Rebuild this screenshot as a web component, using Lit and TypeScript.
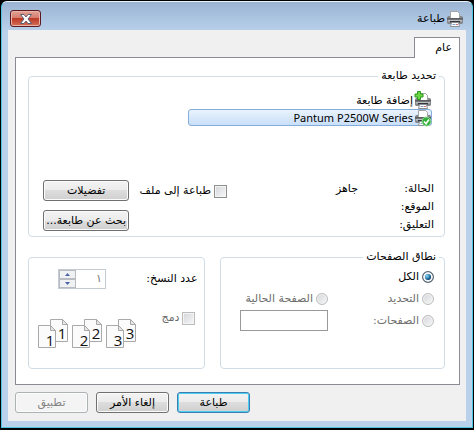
import { LitElement, html, css, svg, nothing } from "lit";
import { customElement, property } from "lit/decorators.js";

const printerBody = svg`
  <path d="M3.500 7V.500h7l2 2V7" fill="#fff" stroke="#a4a4a4"/>
  <path d="M1 5h2v2h10V5h2l1 1.500V12l-1 1H1l-1-1V6.500z" fill="#85888c"/>
  <path d="M0 7h16v1.500H0z" fill="#5c5f63"/>
  <path d="M1 9h14v1.500H1z" fill="#b9bcc0"/>
  <path d="M3 10h10v1.500H3z" fill="#33363a"/>
  <path d="M4.500 11.500h7l1 4h-9z" fill="#fff" stroke="#8c8f93"/>
  <path d="M5.500 13.500h3" stroke="#7fa3cc"/>
  <path d="M9 13.500h2" stroke="#c77"/>`;

@customElement("printer-icon")
export class PrinterIcon extends LitElement {
  @property() badge = "";

  static styles = css`
    :host { display: block; flex: none; width: 16px; height: 16px; }
    svg { display: block; overflow: visible; }
  `;

  render() {
    return html`<svg width="16" height="16" viewBox="0 0 16 16" aria-hidden="true">
      ${printerBody}
      ${this.badge === "add"
        ? svg`<path d="M2.500-1.500h3v2.500h2.500v3H5.500v2.500h-3V4H0V1h2.500z" fill="#6ad646" stroke="#2c9a1c"/>`
        : nothing}
      ${this.badge === "ready"
        ? svg`<circle cx="11.500" cy="11.500" r="4.500" fill="#34b13a" stroke="#9bdc9b"/>
            <path d="M9 11.500l2 2.200 3-4.200" fill="none" stroke="#fff" stroke-width="1.600"/>`
        : nothing}
    </svg>`;
  }
}

@customElement("copy-pair")
export class CopyPair extends LitElement {
  @property() number = "1";

  static styles = css`
    :host { display: block; width: 31px; height: 30px; }
    svg { display: block; }
    .page { stroke: #a9a9a9; fill: #fbfbfb; }
    .fold { stroke: #a9a9a9; fill: #e6e6e6; }
    text { font: 15px "Open Sans", "Noto Sans", sans-serif; fill: #111; }
  `;

  render() {
    return html`<svg direction="ltr" width="31" height="30" viewBox="0 0 31 30" aria-hidden="true">
      <path class="page" d="M12.500.500h12l5 5v17h-17z" />
      <path class="fold" d="M24.500.500v5h5z" />
      <path class="page" d="M.500 6.500h12l5 5v17H.500z" />
      <path class="fold" d="M12.500 6.500v5h5z" />
      <text x="24" y="20" text-anchor="middle">${this.number}</text>
      <text x="12" y="27" text-anchor="middle">${this.number}</text>
    </svg>`;
  }
}

@customElement("app-root")
export class AppRoot extends LitElement {
  static styles = css`
    :host {
      display: block;
      box-sizing: border-box;
      min-height: 100vh;
      padding: 1px 1px 2px;
      background: #000;
      color: #000;
      font: 11px/18px "DejaVu Sans", "Noto Sans", sans-serif;
    }
    * { box-sizing: border-box; }
    .window {
      border: 1px solid #4fc4e0;
      border-top-color: #eaf3fb;
      border-radius: 6px 6px 0 0;
      padding: 0 6px 6px;
      background: linear-gradient(#9ab4d3, #b9d1ea 30px);
    }
    .title-bar {
      display: flex;
      align-items: center;
      justify-content: space-between;
      height: 28px;
      padding: 5px 3px 0 2px;
    }
    h1 { display: flex; align-items: center; gap: 2px; margin: 0; font: inherit; }
    .close {
      display: grid;
      place-items: center;
      width: 31px;
      height: 17px;
      padding: 0;
      border: 1px solid #5a1a20;
      border-radius: 3px;
      background: linear-gradient(#e2a396, #d4796a 50%, #bd3a26 50%, #d4705a);
      box-shadow: inset 0 0 0 1px #e9b5a8;
    }
    .client { padding: 7px 6px 8px 7px; background: #f0f0f0; }
    .tabs { display: flex; }
    .tab {
      width: 46px;
      height: 21px;
      margin-bottom: -1px;
      padding: 0 7px;
      border: 1px solid #898c95;
      border-bottom: 0;
      background: #fff;
      color: inherit;
      font: inherit;
      text-align: start;
      position: relative;
    }
    .panel {
      border: 1px solid #898c95;
      padding: 11px 14px 15px 12px;
      background: #fff;
    }
    fieldset {
      min-width: 0;
      margin: 0;
      padding: 0 10px;
      border: 1px solid #d0dde6;
      border-radius: 4px;
    }
    legend { margin-right: -5px; padding: 0 3px; line-height: 14px; }
    .printer { padding-bottom: 2px; }
    .printers { height: 97px; margin: 0; padding: 9px 2px 0 0; list-style: none; }
    .printers li {
      display: flex;
      align-items: center;
      gap: 2px;
      width: 62%;
      height: 17px;
      border: 1px solid transparent;
      border-radius: 3px;
    }
    .printers .selected {
      border-color: #84acdd;
      background: linear-gradient(#eaf3fd, #c9dffa);
    }
    .latin { font: 11px/16px "Noto Sans", "Open Sans", sans-serif; }
    .status { display: flex; align-items: flex-start; }
    dl { display: grid; grid-template-columns: 76px 1fr; grid-auto-rows: 18px; flex: 1; margin: 0; }
    dd { margin: 0; }
    label { display: flex; align-items: center; gap: 3px; }
    .to-file { width: 98px; height: 22px; }
    .actions { display: grid; gap: 9px; width: 85px; margin-left: 5px; }
    .button {
      height: 21px;
      padding: 0 2px;
      border: 1px solid #707070;
      border-radius: 3px;
      background: linear-gradient(#f3f3f3, #ebebeb 50%, #dddddd 50%, #cfcfcf);
      box-shadow: inset 0 0 0 1px #fbfbfb;
      color: #000;
      font: inherit;
      line-height: 17px;
      white-space: nowrap;
    }
    .button.default { border-color: #3c7fb1; box-shadow: inset 0 0 0 1px #49cdf3; }
    .button:disabled { border-color: #adb2b5; background: #f4f4f4; color: #838383; }
    input { margin: 0; font: inherit; }
    input[type="checkbox"], input[type="radio"] {
      appearance: none;
      flex: none;
      width: 13px;
      height: 13px;
      border: 1px solid #8e8f8f;
      background: linear-gradient(135deg, #d3d5d9, #f8f8f8);
      box-shadow: inset 0 0 0 1px #f4f4f4;
    }
    input[type="radio"] { width: 12px; height: 12px; border-radius: 50%; }
    input[type="radio"]:checked {
      border-color: #5b6670;
      background: radial-gradient(circle at 4px 4px, #8fdcf8, #1c6fa0 3px, #0e3a5c 4px);
      box-shadow: inset 0 0 0 2px #f2f5f7;
    }
    input[type]:disabled { border-color: #bcbcbc; }
    input.text-box:disabled { border-color: #999; }
    .off { color: #6d6d6d; }
    .lower { display: grid; grid-template-columns: 224fr 177fr; gap: 15px; margin-top: 13px; }
    .range {
      display: grid;
      grid-template-columns: 106px 1fr;
      grid-auto-rows: 22px;
      align-content: start;
      padding-top: 2px;
    }
    .range label { height: 22px; }
    .range .all { grid-column: 1 / -1; }
    .text-box {
      width: 88px;
      height: 21px;
      border: 1px solid #999;
      background: #fff;
    }
    .copies { margin-top: 7px; height: 112px; padding: 11px 7px 0 9px; }
    .count { display: flex; justify-content: space-between; height: 20px; }
    .spinner {
      display: flex;
      width: 48px;
      height: 20px;
      margin-left: 20px;
      border: 1px solid #c3cbd2;
    }
    .spinner input { width: 28px; flex: 1; padding: 0 3px; border: 0; background: #fff; color: #777; }
    .steps { display: grid; width: 17px; }
    .steps button {
      display: grid;
      place-items: center;
      padding: 0;
      border: 1px solid #b8bcc2;
      background: #f0f1f3;
    }
    .collate { width: max-content; margin: 20px 2px 0 0; height: 18px; }
    .pairs { display: flex; justify-content: flex-end; gap: 3px; margin-top: -8px; }
    .footer { display: flex; justify-content: flex-end; gap: 8px; margin-top: 7px; }
    .footer .button { width: 73px; }
  `;

  render() {
    return html`
      <main class="window" dir="rtl">
        <header class="title-bar">
          <h1><printer-icon></printer-icon>طباعة</h1>
          <button class="close" aria-label="إغلاق">
            <svg width="12" height="10" viewBox="0 0 12 10" aria-hidden="true">
              <path d="M.500.500h3.500L6 3l2-2.500h3.500L8 5l3.500 4.500H8L6 7 4 9.500H.500L4 5z"
                fill="#fff" stroke="#5d5f72" />
            </svg>
          </button>
        </header>
        <div class="client">
          <div class="tabs" role="tablist">
            <button class="tab" role="tab" aria-selected="true">عام</button>
          </div>
          <section class="panel">
            <fieldset class="printer">
              <legend>تحديد طابعة</legend>
              <ul class="printers">
                <li><printer-icon badge="add"></printer-icon>إضافة طابعة</li>
                <li class="selected">
                  <printer-icon badge="ready"></printer-icon>
                  <span class="latin">Pantum P2500W Series</span>
                </li>
              </ul>
              <div class="status">
                <dl>
                  <dt>الحالة:</dt><dd>جاهز</dd>
                  <dt>الموقع:</dt><dd></dd>
                  <dt>التعليق:</dt><dd></dd>
                </dl>
                <label class="to-file"><input type="checkbox" />طباعة إلى ملف</label>
                <div class="actions">
                  <button class="button">تفضيلات</button>
                  <button class="button">بحث عن طابعة...</button>
                </div>
              </div>
            </fieldset>
            <div class="lower">
              <fieldset>
                <legend>نطاق الصفحات</legend>
                <div class="range">
                  <label class="all"><input type="radio" name="range" checked />الكل</label>
                  <label class="off"><input type="radio" name="range" disabled />التحديد</label>
                  <label class="off"><input type="radio" name="range" disabled />الصفحة الحالية</label>
                  <label class="off"><input type="radio" name="range" disabled />الصفحات:</label>
                  <input class="text-box" type="text" aria-label="الصفحات" disabled />
                </div>
              </fieldset>
              <fieldset class="copies">
                <div class="count">
                  <label for="copies">عدد النسخ:</label>
                  <div class="spinner">
                    <input id="copies" type="text" value="١" />
                    <div class="steps">
                      <button aria-label="زيادة"><svg width="5" height="3"><path d="M0 3h5L2.500 0z" fill="#4a63a8" /></svg></button>
                      <button aria-label="إنقاص"><svg width="5" height="3"><path d="M0 0h5L2.500 3z" fill="#4a63a8" /></svg></button>
                    </div>
                  </div>
                </div>
                <label class="collate off"><input type="checkbox" disabled />دمج</label>
                <div class="pairs">
                  <copy-pair number="3"></copy-pair>
                  <copy-pair number="2"></copy-pair>
                  <copy-pair number="1"></copy-pair>
                </div>
              </fieldset>
            </div>
          </section>
          <footer class="footer">
            <button class="button default">طباعة</button>
            <button class="button">إلغاء الأمر</button>
            <button class="button" disabled>تطبيق</button>
          </footer>
        </div>
      </main>
    `;
  }
}
